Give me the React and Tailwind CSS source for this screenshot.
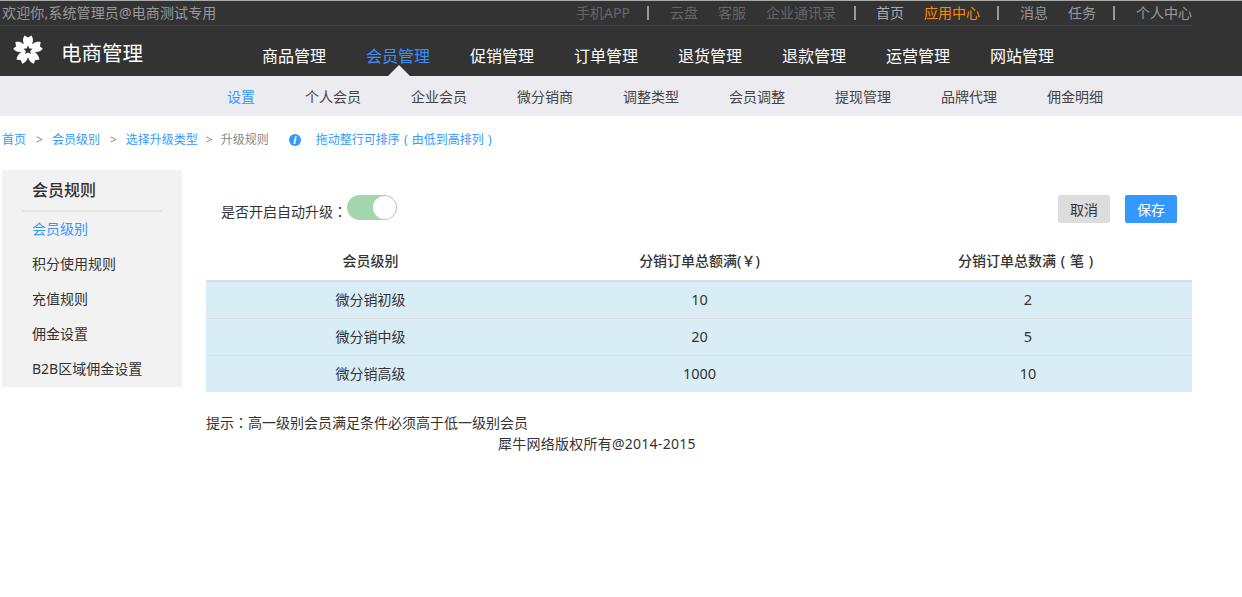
import React from 'react';

const FONT = "font-['Noto_Sans','Noto_Sans_CJK_SC',sans-serif]";
const NAV = ['商品管理', '会员管理', '促销管理', '订单管理', '退货管理', '退款管理', '运营管理', '网站管理'];
const SUB = ['设置', '个人会员', '企业会员', '微分销商', '调整类型', '会员调整', '提现管理', '品牌代理', '佣金明细'];
const SIDE = ['会员级别', '积分使用规则', '充值规则', '佣金设置', 'B2B区域佣金设置'];
const ROWS = [
  ['微分销初级', '10', '2'],
  ['微分销中级', '20', '5'],
  ['微分销高级', '1000', '10'],
];

// centred full-width punctuation, the SC font pushes it to one side
const P = ({ children }) => <span className="font-['Noto_Sans_CJK_TC',sans-serif]">{children}</span>;
const Paren = ({ children, w }) => <span className={`inline-block text-center ${w}`}>{children}</span>;

const Bar = () => <span className="block w-[2px] h-[14px] bg-[#999]" />;

const Flower = () => (
  <svg width="30" height="29" viewBox="0 0 30 29" className="block">
    <g fill="#fff">
      {[0, 72, 144, 216, 288].map((a) => (
        <path key={a} transform={`rotate(${a} 15 15)`} d="M15 14 C9.5 10 9 4 11.5 0.5 L15 2.5 L18.5 0.5 C21 4 20.5 10 15 14Z" />
      ))}
      <circle cx="15" cy="15" r="7.5" />
    </g>
    <path fill="#333" d="M15 10.5l1.4 3 3.2.3-2.4 2.1.7 3.2-2.9-1.7-2.9 1.7.7-3.2-2.4-2.1 3.2-.3z" />
  </svg>
);

export default function App() {
  return (
    <div className={`${FONT} min-h-[597px] bg-white text-[14px] text-[#333]`}>
      <div className="bg-[#333] border-t border-[#aaa]">
        <div className="w-[1192px] h-[25px] flex items-center justify-between pl-[2px] border-b border-[#444] text-[14px] leading-none">
          <span className="text-[#999] tracking-[0.13px]">欢迎你,系统管理员@电商测试专用</span>
          <div className="flex items-center text-[#666]">
            <span>手机APP</span>
            <span className="ml-[17px] mr-[21px]"><Bar /></span>
            <span>云盘</span>
            <span className="ml-[20px]">客服</span>
            <span className="ml-[20px]">企业通讯录</span>
            <span className="ml-[18px] mr-[20px]"><Bar /></span>
            <span className="text-[#aaa]">首页</span>
            <span className="ml-[20px] text-[#ff8a00]">应用中心</span>
            <span className="ml-[17px] mr-[21px]"><Bar /></span>
            <span className="text-[#999]">消息</span>
            <span className="ml-[20px] text-[#999]">任务</span>
            <span className="ml-[17px] mr-[21px]"><Bar /></span>
            <span className="text-[#999]">个人中心</span>
          </div>
        </div>
        <div className="h-[50px] flex items-center">
          <div className="w-[262px] flex items-center pl-[13px] pb-[4px]">
            <Flower />
            <span className="ml-[18px] mt-[8px] text-[20.5px] leading-none text-white">电商管理</span>
          </div>
          <div className="flex gap-[40px] pt-[10px]">
            {NAV.map((n, i) => (
              <div key={n} className="relative h-[40px] leading-[40px]">
                <span className={`text-[16px] ${i === 1 ? 'text-[#3d8ff5]' : 'text-white'}`}>{n}</span>
                {i === 1 && (
                  <span className="absolute left-[22px] bottom-0 w-0 h-0 border-x-[11px] border-x-transparent border-b-[11px] border-b-[#ebebf0]" />
                )}
              </div>
            ))}
          </div>
        </div>
      </div>

      <div className="h-[40px] bg-[#ebebf0] pl-[227px] flex items-center gap-[50px]">
        {SUB.map((s, i) => (
          <span key={s} className={i === 0 ? 'text-[#3399ff]' : 'text-[#444]'}>{s}</span>
        ))}
      </div>

      <div className="h-[54px] pl-[2px] pb-[6px] flex items-center text-[12px] text-[#888]">
        <span className="text-[#3399ff]">首页</span>
        <span className="ml-[10px] mr-[9px]">&gt;</span>
        <span className="text-[#3399ff]">会员级别</span>
        <span className="ml-[10px] mr-[9px]">&gt;</span>
        <span className="text-[#3399ff]">选择升级类型</span>
        <span className="mx-[8px]">&gt;</span>
        <span>升级规则</span>
        <span className="ml-[20px] w-[12px] h-[12px] rounded-full bg-[#3399ff] text-white text-[10px] leading-[12px] text-center italic font-bold">i</span>
        <span className="ml-[15px] text-[#3399ff]">拖动整行可排序<Paren w="w-[12px]">(</Paren>由低到高排列<Paren w="w-[12px]">)</Paren></span>
      </div>

      <div className="flex items-start pl-[2px]">
        <div className="w-[180px] h-[217px] bg-[#f2f2f2]">
          <div className="mx-[20px] h-[42px] border-b-2 border-[#e5e5e5] pl-[10px] leading-[41px] text-[16px] font-medium">会员规则</div>
          {SIDE.map((s, i) => (
            <div key={s} className={`pl-[30px] h-[35px] leading-[33px] ${i === 0 ? 'text-[#3399ff]' : ''}`}>{s}</div>
          ))}
        </div>

        <div className="ml-[24px] w-[986px]">
          <div className="h-[53px] pt-[25px] pr-[15px] flex justify-between">
            <div className="flex pl-[15px]">
              <span className="leading-[33px] h-[33px]">是否开启自动升级<P>：</P></span>
              <span className="w-[50px] h-[25px] rounded-full bg-[#a2d6ae] flex justify-end items-center pr-[1px]">
                <span className="w-[23px] h-[23px] rounded-full bg-white" />
              </span>
            </div>
            <div className="flex gap-[15px]">
              <button className="w-[52px] h-[28px] rounded-[2px] bg-[#ddd]">取消</button>
              <button className="w-[52px] h-[28px] rounded-[2px] bg-[#3399ff] text-white">保存</button>
            </div>
          </div>
          <div className="grid grid-cols-[329px_329px_328px] text-center mt-[19px]">
            <div className="h-[40px] leading-[38px] border-b-2 border-[#ddd] font-medium">会员级别</div>
            <div className="h-[40px] leading-[38px] border-b-2 border-[#ddd] font-medium">分销订单总额满(￥)</div>
            <div className="h-[40px] leading-[38px] border-b-2 border-[#ddd] font-medium">分销订单总数满<Paren w="w-[14px]">(</Paren>笔<Paren w="w-[14px]">)</Paren></div>
            {ROWS.map((r, i) =>
              r.map((c, j) => (
                <div key={`${i}-${j}`} className={`leading-[35px] bg-[#d9edf7] ${i < 2 ? 'h-[37px] border-b border-[#ddd]' : 'h-[36px]'} ${j > 0 ? 'text-[14.5px]' : ''}`}>{c}</div>
              ))
            )}
          </div>
          <div className="mt-[20px] leading-[20px]">提示<P>：</P>高一级别会员满足条件必须高于低一级别会员</div>
          <div className="mt-[1px] ml-[292px] leading-[20px] tracking-[0.25px]">犀牛网络版权所有@2014-2015</div>
        </div>
      </div>
    </div>
  );
}
